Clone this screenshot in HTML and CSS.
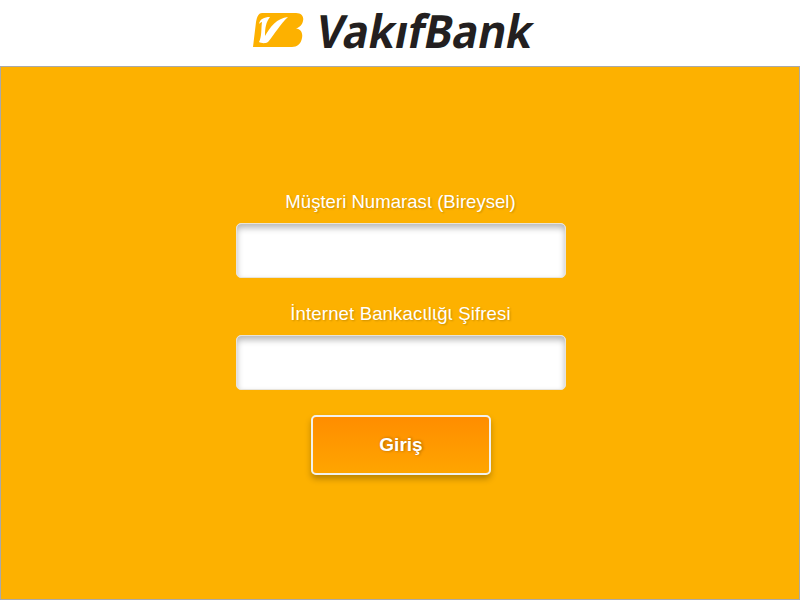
FILE: index.html
```html
<!DOCTYPE html>
<html lang="tr">
<head>
<meta charset="utf-8">
<title>VakıfBank</title>
<link rel="stylesheet" href="styles.css">
</head>
<body>
<header class="header">
  <svg class="logo" width="300" height="58" viewBox="245 4 300 58" role="img" aria-label="VakıfBank">
    <path class="mark" d="M262 13H296C302 13 304 17 303 21C302 25 300 27 296 28.500C301 29 303 33 302 38C301 44 297 47 292 47H253L256 22C257 16 259 13 262 13Z"/>
    <path class="check" d="M259 24C260 19 264 17 270 17C266 22 265 28 265 36C270 27 277 18 288 17C281 23 274 35 268 42C265 44 261 43 259 42C262 37 261 28 262 22C261 22 260 23 259 24Z"/>
    <text class="word" transform="translate(314 48) skewX(-11)" textLength="216" lengthAdjust="spacingAndGlyphs">VakıfBank</text>
  </svg>
</header>
<main class="panel">
  <form class="login">
    <label class="label" for="no">Müşteri Numaras<span class="iota">ι</span> (Bireysel)</label>
    <input class="field" id="no" type="text">
    <label class="label wide" for="pw">İnternet Bankac<span class="iota">ι</span>l<span class="iota">ι</span>ğ<span class="iota">ι</span> Şifresi</label>
    <input class="field" id="pw" type="password">
    <button class="submit" type="button">Giriş</button>
  </form>
</main>
</body>
</html>
```
FILE: styles.css
```css
* { box-sizing: border-box; }
body {
  margin: 0;
  height: 600px;
  display: flex;
  flex-direction: column;
  overflow: hidden;
  background: #fff;
  font-family: "Liberation Sans", Arial, sans-serif;
}
.header { height: 66px; padding: 4px 0 0 245px; }
.logo { display: block; overflow: visible; }
.mark { fill: #fdb100; }
.check { fill: #fff; }
.word { font: 700 46px/1 "Noto Sans", sans-serif; fill: #231f20; }
.panel {
  flex: 1;
  border: 1px solid #a9a9a9;
  background: #fdb100;
  padding: 123px 0 0 2px;
}
.login { display: flex; flex-direction: column; align-items: center; }
.label {
  height: 24px;
  margin: 0 1px 9px 0;
  line-height: 24px;
  font-size: 18.6px;
  color: #fff;
  text-shadow: 1px 1px 2px rgba(0, 0, 0, .2);
}
.wide { letter-spacing: .12px; }
.iota { font-family: Inter, sans-serif; line-height: 1; }
.field {
  width: 330px;
  height: 55px;
  margin: 0 0 24px;
  padding: 0 12px;
  border: 1px solid #e8e4da;
  border-radius: 5px;
  background: #fff;
  box-shadow: inset 0 4px 6px rgba(0, 0, 0, .28);
  font-size: 18px;
  outline: none;
}
.submit {
  width: 180px;
  height: 60px;
  margin-top: 1px;
  padding: 0 0 1px;
  border: 2px solid #f1f1ee;
  border-radius: 5px;
  background: linear-gradient(#ff8d00, #ffa500);
  box-shadow: 0 4px 6px rgba(0, 0, 0, .25);
  color: #fff;
  font: bold 19px "Liberation Sans", Arial, sans-serif;
  text-shadow: 1px 0 3px rgba(0, 0, 0, .35);
}
```
